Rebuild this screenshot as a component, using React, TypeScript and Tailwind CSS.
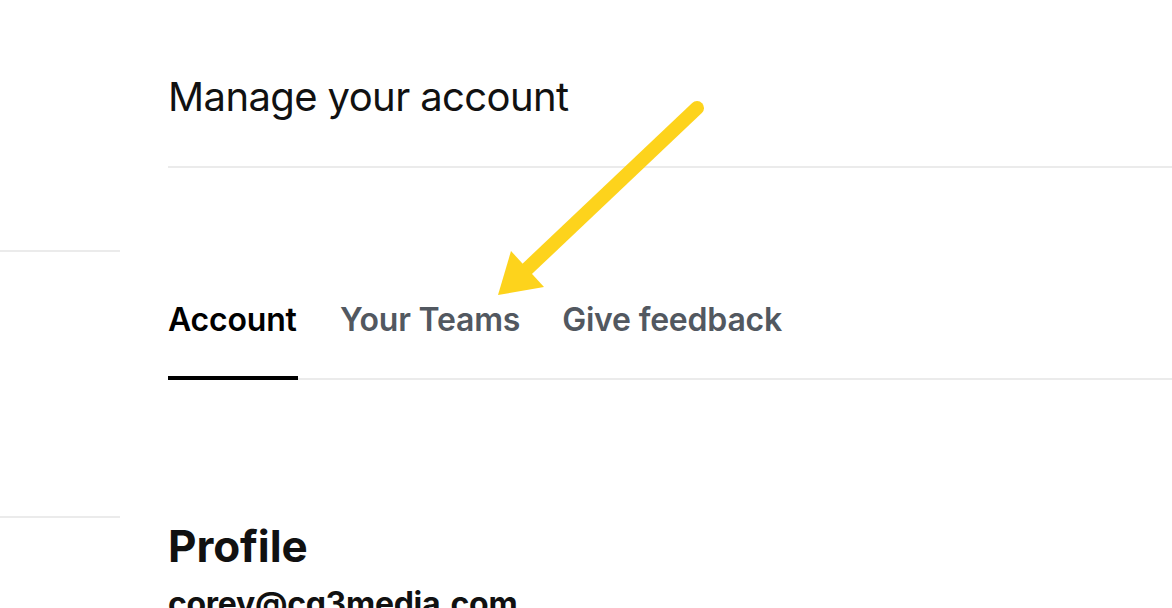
import React from 'react';

const tabs = [
  { text: 'Account', active: true },
  { text: 'Your Teams', active: false },
  { text: 'Give feedback', active: false },
];

function Arrow() {
  return (
    <svg
      className="absolute left-0 top-0 pointer-events-none"
      width={1172}
      height={608}
      viewBox="0 0 1172 608"
    >
      <line x1={697} y1={108} x2={526} y2={270} stroke="#fdd31c" strokeWidth={14} strokeLinecap="round" />
      <polygon points="498,295 511,251 544,287" fill="#fdd31c" />
    </svg>
  );
}

export default function App() {
  return (
    <div className="relative w-[1172px] h-[608px] overflow-hidden bg-white font-['Inter',sans-serif] text-[#111111]">
      <div className="flex flex-row h-full">
        {/* sidebar */}
        <div className="w-[120px] flex flex-col shrink-0">
          <div className="h-[252px] shrink-0 border-b-2 border-[#ebebeb]" />
          <div className="h-[266px] shrink-0 border-b-2 border-[#ebebeb]" />
        </div>

        {/* main */}
        <div className="flex-1 ml-[48px] flex flex-col">
          <div className="h-[168px] shrink-0 pt-[77px] border-b-2 border-[#ebebeb]">
            <h1 className="text-[40px] leading-none font-normal tracking-[-0.6px]">Manage your account</h1>
          </div>

          <div className="shrink-0 mt-[136px] flex flex-row gap-[42px] border-b-2 border-[#ebebeb]">
            {tabs.map((t) => (
              <button
                key={t.text}
                className={
                  t.active
                    ? 'text-[32px] leading-none font-semibold tracking-[-0.2px] text-black pb-[40px] border-b-4 border-black -mb-[2px] w-[130px] text-left'
                    : 'text-[32px] leading-none font-semibold tracking-[-0.2px] text-[#525860] pb-[40px] border-b-4 border-transparent -mb-[2px]'
                }
              >
                {t.text}
              </button>
            ))}
          </div>

          <div className="shrink-0 mt-[144px]">
            <h2 className="text-[44px] leading-none font-bold tracking-[-0.1px]">Profile</h2>
            <p className="mt-[20px] text-[32px] leading-none font-bold tracking-[-0.3px]">corey@cg3media.com</p>
          </div>
        </div>
      </div>
      <Arrow />
    </div>
  );
}
